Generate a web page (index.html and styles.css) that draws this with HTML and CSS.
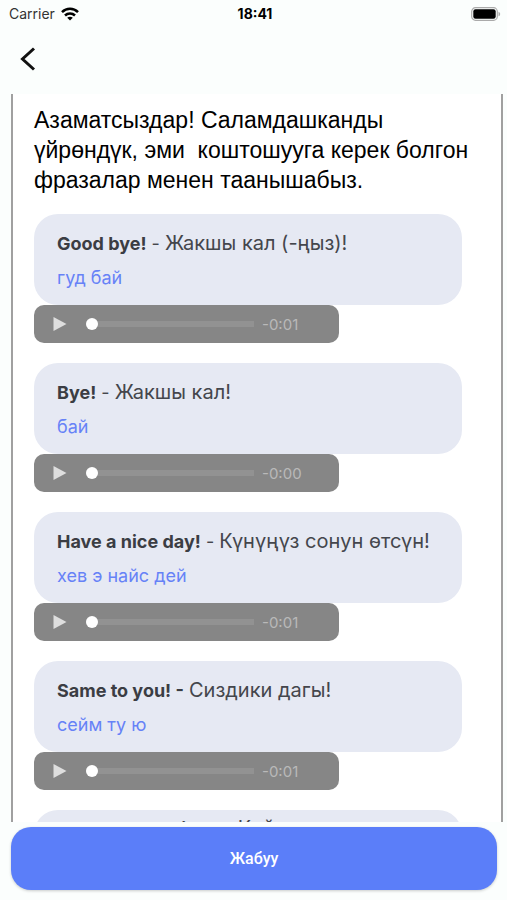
FILE: index.html
```html
<!DOCTYPE html>
<html lang="ky">
<head>
<meta charset="utf-8">
<meta name="viewport" content="width=device-width, initial-scale=1">
<title>Коштошуу</title>
<link rel="stylesheet" href="styles.css">
</head>
<body>
<div class="app">
  <header>
    <div class="status">
      <div class="carrier">Carrier
        <svg width="18" height="14" viewBox="0 0 18 14" fill="none" stroke="#000" stroke-width="2.5" aria-hidden="true"><path d="M1 5.2C5.5.7 12.500.7 17 5.200M4 8.500c2.800-2.800 7.200-2.800 10 0"/><path d="M9 13.500 6.200 10.800c1.500-1.500 4.100-1.500 5.600 0z" fill="#000" stroke="none"/></svg>
      </div>
      <time>18:41</time>
      <svg class="battery" width="30" height="14" viewBox="0 0 30 14" aria-hidden="true"><rect x=".7" y=".7" width="25.600" height="12.600" rx="3.800" fill="none" stroke="#aaa" stroke-width="1.200"/><rect x="2.300" y="2.300" width="22.400" height="9.400" rx="2.200"/><path d="M27.500 4.700c2.200.8 2.200 3.800 0 4.600z" fill="#aaa"/></svg>
    </div>
    <button class="back" aria-label="Артка"><svg width="16" height="24" viewBox="0 0 16 24" fill="none" stroke="#111" stroke-width="3"><path d="M14 1.500 2.500 12 14 22.500"/></svg></button>
  </header>
  <main>
    <div class="lesson">
      <p class="intro">Азаматсыздар! Саламдашканды үйрөндүк, эми&nbsp; коштошууга керек болгон фразалар менен таанышабыз.</p>
      <section class="phrase">
        <div class="card"><p class="line"><b>Good bye!</b> - <span>Жакшы кал (-ңыз)!</span></p><p class="sound">гуд бай</p></div>
        <div class="player"><button class="play" aria-label="Ойнотуу"><svg width="16" height="16" viewBox="0 0 16 16"><path d="M1.500 1v14L14.500 8z"/></svg></button><input type="range" value="0" aria-label="Убакыт"><span class="left">-0:01</span></div>
      </section>
      <section class="phrase">
        <div class="card"><p class="line"><b>Bye!</b> - <span>Жакшы кал!</span></p><p class="sound">бай</p></div>
        <div class="player"><button class="play" aria-label="Ойнотуу"><svg width="16" height="16" viewBox="0 0 16 16"><path d="M1.500 1v14L14.500 8z"/></svg></button><input type="range" value="0" aria-label="Убакыт"><span class="left">-0:00</span></div>
      </section>
      <section class="phrase">
        <div class="card"><p class="line"><b>Have a nice day!</b> - <span>Күнүңүз сонун өтсүн!</span></p><p class="sound">хев э найс дей</p></div>
        <div class="player"><button class="play" aria-label="Ойнотуу"><svg width="16" height="16" viewBox="0 0 16 16"><path d="M1.500 1v14L14.500 8z"/></svg></button><input type="range" value="0" aria-label="Убакыт"><span class="left">-0:01</span></div>
      </section>
      <section class="phrase">
        <div class="card"><p class="line"><b>Same to you! -</b> <span>Сиздики дагы!</span></p><p class="sound">сейм ту ю</p></div>
        <div class="player"><button class="play" aria-label="Ойнотуу"><svg width="16" height="16" viewBox="0 0 16 16"><path d="M1.500 1v14L14.500 8z"/></svg></button><input type="range" value="0" aria-label="Убакыт"><span class="left">-0:01</span></div>
      </section>
      <section class="phrase">
        <div class="card compact"><p class="line"><b>See you next time!</b> - <span>Кийинки</span></p></div>
      </section>
    </div>
  </main>
  <footer><button class="close">Жабуу</button></footer>
</div>
</body>
</html>
```
FILE: styles.css
```css
* { box-sizing: border-box; }
body { margin: 0; background: #fbfefd; color: #000; font-family: Inter, "Liberation Sans", sans-serif; }
p { margin: 0; }
button { border: 0; padding: 0; background: none; font: inherit; cursor: pointer; }
svg { display: block; }
.app { display: flex; flex-direction: column; height: 100vh; }
.status { display: grid; grid-template-columns: 1fr auto 1fr; align-items: center; height: 27px; padding: 0 6px 0 9px; font-size: 14px; }
.carrier { display: flex; align-items: center; gap: 6px; color: #333; }
time { font-size: 14px; font-weight: 700; }
.battery { justify-self: end; }
.back { display: block; margin: 20px 20px 23px; }
main { flex: 1; min-height: 0; overflow: hidden; margin: 0 4px 0 11px; background: #fff; border-left: 2px solid #a0a0a0; border-right: 2px solid #a0a0a0; }
.lesson { padding: 11px 21px; }
.intro { margin-bottom: 19px; font: 23px/30px "Liberation Sans", Arial, sans-serif; }
.phrase { margin-bottom: 20px; }
.card { margin-right: 18px; height: 91px; padding: 15px 23px; border-radius: 24px; background: #e6e9f3; color: #44464c; }
.compact { padding-top: 4px; }
.line { font-size: 18px; line-height: 28px; white-space: nowrap; }
.line b { font-weight: 700; color: #3b3d43; }
.line span { font-size: 20px; }
.sound { margin-top: 6px; font-size: 18px; line-height: 28px; color: #6682f7; }
.player { display: flex; align-items: center; width: 305px; height: 38px; padding: 0 18px; border-radius: 10px; background: #868686; }
.play svg { fill: #dedede; }
input { appearance: none; width: 168px; height: 14px; margin: 0 8px 0 18px; background: linear-gradient(#929292, #929292) center / 100% 6px no-repeat; }
input::-webkit-slider-thumb { appearance: none; width: 12px; height: 12px; border-radius: 50%; background: #fff; }
.left { font-size: 15px; color: #b9b9b9; }
footer { padding: 5px 10px 10px 11px; }
.close { display: block; width: 100%; height: 63px; border-radius: 20px; background: #5b7ef9; box-shadow: 0 1px 3px #0003; color: #fff; font: 500 16px Roboto, sans-serif; }
```
